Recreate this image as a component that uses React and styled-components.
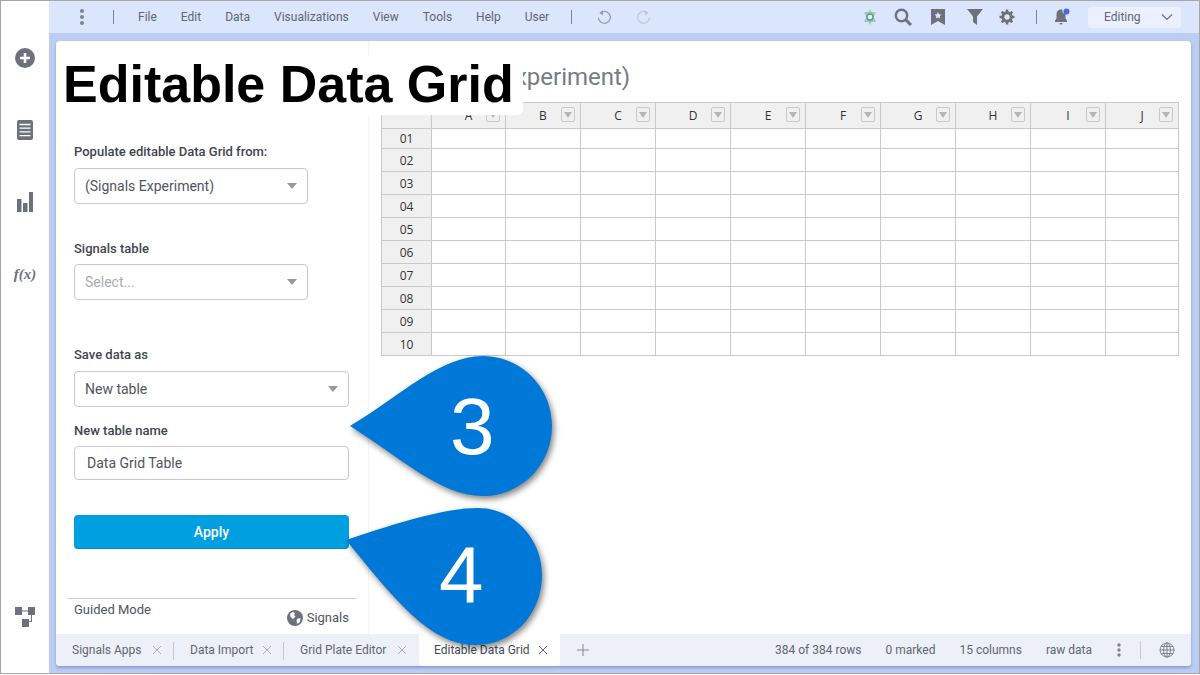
import React from "react";
import styled, { createGlobalStyle } from "styled-components";

const GlobalStyle = createGlobalStyle`
  html, body {
    margin: 0;
    padding: 0;
    background: #fff;
    font-family: Roboto, "Liberation Sans", sans-serif;
  }
`;

const Frame = styled.div`
  position: relative;
  box-sizing: border-box;
  width: 1200px;
  height: 674px;
  border: 1px solid #a6a6a6;
  display: flex;
  overflow: hidden;
  background: #fff;
`;

const Rail = styled.nav`
  width: 48px;
  flex: none;
  display: flex;
  flex-direction: column;
  align-items: center;
  padding-top: 45px;
  box-sizing: border-box;
  color: #6d717b;
`;

const RailIcon = styled.div`
  height: 24px;
  margin-bottom: ${(p) => p.$gap || 48}px;
  display: flex;
  align-items: center;
  justify-content: center;
  margin-top: ${(p) => (p.$bottom ? "auto" : "0")};
`;

const Fx = styled.span`
  font-family: "Liberation Serif", serif;
  font-style: italic;
  font-weight: 700;
  font-size: 15px;
  color: #6d717b;
`;

const Main = styled.div`
  flex: 1;
  min-width: 0;
  display: flex;
  flex-direction: column;
  background: #bccdf3;
`;

const Toolbar = styled.header`
  height: 32px;
  flex: none;
  background: #dbe5fb;
  display: flex;
  align-items: center;
  padding-left: 30px;
  padding-right: 18px;
  color: #6b707a;
`;

const VLine = styled.span`
  width: 1px;
  height: ${(p) => p.$h || 14}px;
  background: ${(p) => p.$color || "#7d828c"};
  flex: none;
  margin-left: ${(p) => p.$ml || 0}px;
`;

const Menu = styled.div`
  display: flex;
  gap: 24px;
  margin-left: 24px;
`;

const MenuItem = styled.span`
  font-size: 12px;
  color: #5f6672;
`;

const ToolIcon = styled.span`
  display: flex;
  align-items: center;
  justify-content: center;
  flex: none;
  width: ${(p) => p.$w || 20}px;
  margin-left: ${(p) => p.$ml || 0}px;
`;

const ModeSelect = styled.div`
  width: 93px;
  height: 21px;
  flex: none;
  margin-left: 16px;
  box-sizing: border-box;
  padding: 0 8px 0 16px;
  background: #eaf0fd;
  border-radius: 3px;
  display: flex;
  align-items: center;
  justify-content: space-between;
  font-size: 12px;
  color: #5f6672;
`;

const RightTools = styled.div`
  margin-left: auto;
  display: flex;
  align-items: center;
`;

const Card = styled.div`
  flex: 1;
  min-height: 0;
  margin: 8px 8px 7px 7px;
  border-radius: 4px;
  background: #fff;
  display: flex;
  flex-direction: column;
  box-shadow: 0 2px 3px rgba(80, 100, 160, 0.45);
  overflow: hidden;
`;

const CardBody = styled.div`
  flex: 1;
  min-height: 0;
  display: flex;
`;

const SidePanel = styled.aside`
  width: 313px;
  flex: none;
  box-sizing: border-box;
  padding: 103px 12px 0 12px;
  border-right: 1px solid #f3f4fb;
  display: flex;
  flex-direction: column;
`;

const Field = styled.div`
  margin-top: ${(p) => p.$mt || 0}px;
  padding: 0 6px;
  width: ${(p) => p.$w}px;
  box-sizing: content-box;
`;

const Label = styled.label`
  display: block;
  height: 16px;
  line-height: 16px;
  font-size: 13px;
  font-weight: 500;
  color: #3f4550;
  margin-bottom: ${(p) => p.$mb || 8}px;
`;

const SelectBox = styled.div`
  height: 36px;
  box-sizing: border-box;
  border: 1px solid #c9c9c9;
  border-radius: 4px;
  display: flex;
  align-items: center;
  justify-content: space-between;
  padding: 0 10px;
  font-size: 14px;
  color: ${(p) => (p.$placeholder ? "#a9abb0" : "#4f5560")};
`;

const Caret = styled.span`
  width: 0;
  height: 0;
  border-left: 5.5px solid transparent;
  border-right: 5.5px solid transparent;
  border-top: 6px solid #999;
`;

const TextInput = styled.div`
  height: 34px;
  box-sizing: border-box;
  border: 1px solid #c9c9c9;
  border-radius: 4px;
  display: flex;
  align-items: center;
  padding: 0 12px;
  font-size: 14px;
  color: #4f5560;
`;

const ApplyButton = styled.button`
  display: block;
  width: 100%;
  height: 34px;
  border: 0;
  border-bottom: 1px solid #0090c8;
  border-radius: 4px;
  background: #00a0e0;
  color: #fff;
  font-family: Roboto, sans-serif;
  font-size: 14px;
  font-weight: 500;
  padding: 0;
`;

const PanelFooter = styled.div`
  margin-top: auto;
  height: 36px;
  box-sizing: border-box;
  border-top: 1px solid #c9c9c9;
  padding: 2px 7px 0 6px;
  display: flex;
  justify-content: space-between;
  font-size: 13px;
  line-height: 18px;
  color: #4f5560;
`;

const Signals = styled.span`
  display: flex;
  align-items: center;
  gap: 4px;
`;

const Content = styled.section`
  flex: 1;
  min-width: 0;
  padding: 20px 0 0 12px;
`;

const SheetTitle = styled.h2`
  margin: 0;
  height: 41px;
  padding-left: 28px;
  font-size: 24px;
  line-height: 32px;
  font-weight: 400;
  color: #777b82;
  white-space: nowrap;
`;

const Sheet = styled.div`
  display: grid;
  grid-template-columns: 50px 74px repeat(8, 75px) 73px;
  grid-auto-rows: 23px;
  width: max-content;
  border-top: 1px solid #c9c9c9;
  border-left: 1px solid #c9c9c9;
  font-family: "Open Sans", sans-serif;
  font-size: 12px;
  color: #333;
`;

const Cell = styled.div`
  box-sizing: border-box;
  border-right: 1px solid #c9c9c9;
  border-bottom: 1px solid #c9c9c9;
  background: ${(p) => (p.$head ? "#f0f0f0" : "#fff")};
  display: flex;
  align-items: center;
  justify-content: center;
  position: relative;
  ${(p) => (p.$top ? "height: 26px; margin-bottom: 3px; margin-top: 0;" : "")}
`;

const FilterButton = styled.span`
  position: absolute;
  right: 5px;
  top: 4px;
  width: 14px;
  height: 15px;
  box-sizing: border-box;
  border: 1px solid #c9c9c9;
  border-radius: 2px;
  background: #f0f0f0;
  display: flex;
  align-items: center;
  justify-content: center;
  &::after {
    content: "";
    border-left: 4px solid transparent;
    border-right: 4px solid transparent;
    border-top: 6px solid #b5b5b5;
  }
`;

const BottomBar = styled.footer`
  height: 32px;
  flex: none;
  background: #edf0f8;
  display: flex;
  align-items: stretch;
  font-size: 12px;
  color: #5f6672;
`;

const Tab = styled.div`
  display: flex;
  align-items: center;
  justify-content: space-between;
  box-sizing: border-box;
  width: ${(p) => p.$w}px;
  padding: 0 ${(p) => (p.$active ? 12 : 12)}px 0 ${(p) => (p.$active ? 15 : 16)}px;
  background: ${(p) => (p.$active ? "#fff" : "transparent")};
  border-radius: ${(p) => (p.$active ? "0 0 4px 4px" : "0")};
  color: ${(p) => (p.$active ? "#454b56" : "#5f6672")};
  position: relative;
  ${(p) =>
    p.$sep
      ? `&::after { content: ""; position: absolute; right: 0; top: 8px; height: 18px; width: 1px; background: #c5c8d0; }`
      : ""}
`;

const PlusTab = styled.span`
  align-self: center;
  margin-left: 17px;
  display: flex;
`;

const Status = styled.div`
  margin-left: auto;
  display: flex;
  align-items: center;
  gap: 24px;
  padding-right: 16px;
`;

const StatusTail = styled.div`
  display: flex;
  align-items: center;
  gap: 18px;
`;

const Title = styled.div`
  position: absolute;
  left: 56px;
  top: 54px;
  width: 466px;
  height: 60px;
  background: #fff;
  border-radius: 0 0 6px 0;
  box-sizing: border-box;
  padding-left: 6px;
  font-family: "Liberation Sans", Arial, sans-serif;
  font-weight: 700;
  font-size: 52px;
  line-height: 58px;
  color: #000;
  white-space: nowrap;
`;

const Callout = styled.svg`
  position: absolute;
  left: 0;
  top: 0;
  pointer-events: none;
  filter: drop-shadow(2px 3px 3px rgba(0, 0, 0, 0.5));
`;

const CalloutNumber = styled.div`
  position: absolute;
  left: ${(p) => p.$x}px;
  top: ${(p) => p.$y}px;
  font-family: "Liberation Sans", Arial, sans-serif;
  font-size: 80px;
  line-height: 80px;
  color: #fff;
`;

const Dots = ({ r = 2, color = "#7d828c", gap = 6 }) => (
  <svg width="6" height={gap * 2 + 6} viewBox={`0 0 6 ${gap * 2 + 6}`}>
    <circle cx="3" cy="3" r={r} fill={color} />
    <circle cx="3" cy={3 + gap} r={r} fill={color} />
    <circle cx="3" cy={3 + gap * 2} r={r} fill={color} />
  </svg>
);

const Close = ({ color = "#a9acb3" }) => (
  <svg width="10" height="10" viewBox="0 0 10 10" stroke={color} strokeWidth="1" fill="none">
    <path d="M1 1l8 8M9 1l-8 8" />
  </svg>
);

const Globe = ({ size = 16, color = "#7d828c" }) => (
  <svg width={size} height={size} viewBox="0 0 16 16" fill="none" stroke={color} strokeWidth="1">
    <circle cx="8" cy="8" r="7" />
    <ellipse cx="8" cy="8" rx="3.4" ry="7" />
    <path d="M8 1v14M1 8h14M2 4.5h12M2 11.5h12" />
  </svg>
);

const columns = ["A", "B", "C", "D", "E", "F", "G", "H", "I", "J"];
const rows = ["01", "02", "03", "04", "05", "06", "07", "08", "09", "10"];
const menu = ["File", "Edit", "Data", "Visualizations", "View", "Tools", "Help", "User"];

export default function App() {
  return (
    <>
      <GlobalStyle />
      <Frame>
        <Rail>
          <RailIcon>
            <svg width="20" height="20" viewBox="0 0 20 20">
              <circle cx="10" cy="10" r="10" fill="#6d717b" />
              <path d="M10 5v10M5 10h10" stroke="#fff" strokeWidth="2.6" />
            </svg>
          </RailIcon>
          <RailIcon>
            <svg width="16" height="20" viewBox="0 0 16 20">
              <rect width="16" height="20" rx="2" fill="#6d717b" />
              <path d="M2.5 4.5h11M2.5 8.2h11M2.5 11.9h11M2.5 15.6h11" stroke="#fff" strokeWidth="1.3" />
            </svg>
          </RailIcon>
          <RailIcon>
            <svg width="16" height="20" viewBox="0 0 16 20" fill="#6d717b">
              <rect x="0" y="7" width="4.5" height="13" />
              <rect x="6" y="11" width="4.5" height="9" />
              <rect x="12" y="0" width="4" height="20" />
            </svg>
          </RailIcon>
          <RailIcon $gap={1}>
            <Fx>f(x)</Fx>
          </RailIcon>
          <RailIcon $bottom $gap={44}>
            <svg width="20" height="20" viewBox="0 0 20 20" fill="#6d717b">
              <rect x="0" y="0" width="7" height="8" />
              <rect x="13" y="0" width="7" height="8" />
              <rect x="7" y="12" width="7" height="8" />
              <path d="M7 3.5h6v1H7zM16 8h1v7h-3v-1h2z" />
            </svg>
          </RailIcon>
        </Rail>

        <Main>
          <Toolbar>
            <Dots />
            <VLine $ml={28} />
            <Menu>
              {menu.map((m) => (
                <MenuItem key={m}>{m}</MenuItem>
              ))}
            </Menu>
            <VLine $ml={22} />
            <ToolIcon $ml={22}>
              <svg width="16" height="16" viewBox="0 0 16 16" fill="none" stroke="#9a9ea6" strokeWidth="1.3">
                <path d="M4 4.2a6 6 0 1 1-1.6 4.6" />
                <path d="M7 1L3.6 4.2 7 6.6" fill="#9a9ea6" stroke="none" />
              </svg>
            </ToolIcon>
            <ToolIcon $ml={20}>
              <svg width="16" height="16" viewBox="0 0 16 16" fill="none" stroke="#c3c7cf" strokeWidth="1.3">
                <path d="M12 4.2a6 6 0 1 0 1.6 4.6" />
                <path d="M9 1l3.4 3.2L9 6.6" fill="#c3c7cf" stroke="none" />
              </svg>
            </ToolIcon>
            <RightTools>
              <ToolIcon $w={18}>
                <svg width="16" height="18" viewBox="0 0 16 18" fill="none">
                  <path d="M8 1L14 14H2z" fill="#7fc4c0" opacity=".8" />
                  <path d="M8 17L2 4h12z" fill="#8fc79a" opacity=".8" />
                  <circle cx="8" cy="9" r="3" fill="#e8f2ee" stroke="#5b9e8e" strokeWidth="1.4" />
                </svg>
              </ToolIcon>
              <ToolIcon $ml={14}>
                <svg width="18" height="18" viewBox="0 0 18 18" fill="none" stroke="#6d717b">
                  <circle cx="7.5" cy="7.5" r="5.7" strokeWidth="2.4" />
                  <path d="M12 12l5 5" strokeWidth="3" />
                </svg>
              </ToolIcon>
              <ToolIcon $ml={15}>
                <svg width="14" height="16" viewBox="0 0 14 16">
                  <path d="M0 0h14v16l-7-4-7 4z" fill="#6d717b" />
                  <path d="M7 3l1.1 2.3 2.4.3-1.8 1.6.5 2.4L7 8.4 4.800 9.600l.5-2.4L3.500 5.600l2.400-.3z" fill="#dbe5fb" />
                </svg>
              </ToolIcon>
              <ToolIcon $ml={17}>
                <svg width="16" height="16" viewBox="0 0 16 16">
                  <path d="M0 0h16L10 7.500V16L6 13V7.500z" fill="#6d717b" />
                </svg>
              </ToolIcon>
              <ToolIcon $ml={12}>
                <svg width="16" height="16" viewBox="0 0 16 16">
                  <circle cx="8" cy="8" r="4.200" fill="none" stroke="#6d717b" strokeWidth="3" />
                  <path
                    d="M8 0.500v3M8 12.500v3M0.500 8h3M12.500 8h3M2.700 2.700l2.100 2.100M11.200 11.200l2.100 2.100M13.300 2.700l-2.100 2.100M4.800 11.200l-2.100 2.100"
                    stroke="#6d717b"
                    strokeWidth="2.600"
                  />
                </svg>
              </ToolIcon>
              <VLine $ml={19} />
              <ToolIcon $ml={15}>
                <svg width="16" height="18" viewBox="0 0 16 18">
                  <path d="M7 1.500c-3 0-4.500 2.300-4.500 5v4L1 12.500V14h12v-1.500L11.500 10.500V6C9 6 8 4 8.500 1.800 8 1.600 7.500 1.500 7 1.500z" fill="#6d717b" />
                  <path d="M5.500 15h3a1.500 1.500 0 0 1-3 0z" fill="#6d717b" />
                  <circle cx="12.500" cy="3.500" r="3" fill="#4a66e0" />
                </svg>
              </ToolIcon>
              <ModeSelect>
                Editing
                <svg width="12" height="8" viewBox="0 0 12 8" fill="none" stroke="#6b707a" strokeWidth="1.2">
                  <path d="M1 1.500l5 5 5-5" />
                </svg>
              </ModeSelect>
            </RightTools>
          </Toolbar>

          <Card>
            <CardBody>
              <SidePanel>
                <Field $w={234}>
                  <Label>Populate editable Data Grid from:</Label>
                  <SelectBox>
                    (Signals Experiment)
                    <Caret />
                  </SelectBox>
                </Field>
                <Field $w={234} $mt={37}>
                  <Label $mb={7}>Signals table</Label>
                  <SelectBox $placeholder>
                    Select...
                    <Caret />
                  </SelectBox>
                </Field>
                <Field $w={275} $mt={47}>
                  <Label>Save data as</Label>
                  <SelectBox>
                    New table
                    <Caret />
                  </SelectBox>
                </Field>
                <Field $w={275} $mt={16}>
                  <Label $mb={7}>New table name</Label>
                  <TextInput>Data Grid Table</TextInput>
                </Field>
                <Field $w={275} $mt={35}>
                  <ApplyButton>Apply</ApplyButton>
                </Field>
                <PanelFooter>
                  Guided Mode
                  <Signals>
                    <svg width="16" height="16" viewBox="0 0 16 16">
                      <circle cx="8" cy="8" r="8" fill="#6d717b" />
                      <path d="M3 3.500l3-1.500 2 1-1 2 1.500 1.500L6 9 3.500 7zM10 9l3.500-1L13 12l-2.500 2L9.500 11.500z" fill="#fff" />
                    </svg>
                    Signals
                  </Signals>
                </PanelFooter>
              </SidePanel>

              <Content>
                <SheetTitle>(Signals Experiment)</SheetTitle>
                <Sheet>
                  <Cell $head style={{ height: 26, marginBottom: -3 }} />
                  {columns.map((c) => (
                    <Cell $head key={c} style={{ height: 26, marginBottom: -3 }}>
                      {c}
                      <FilterButton />
                    </Cell>
                  ))}
                  {rows.map((r) => (
                    <React.Fragment key={r}>
                      <Cell $head style={{ marginTop: r === "01" ? 3 : 0, height: r === "01" ? 20 : 23 }}>{r}</Cell>
                      {columns.map((c) => (
                        <Cell key={c} style={{ marginTop: r === "01" ? 3 : 0, height: r === "01" ? 20 : 23 }} />
                      ))}
                    </React.Fragment>
                  ))}
                </Sheet>
              </Content>
            </CardBody>

            <BottomBar>
              <Tab $w={118} $sep>
                Signals Apps
                <Close />
              </Tab>
              <Tab $w={110} $sep>
                Data Import
                <Close />
              </Tab>
              <Tab $w={135}>
                Grid Plate Editor
                <Close />
              </Tab>
              <Tab $w={141} $active>
                Editable Data Grid
                <Close color="#5f6672" />
              </Tab>
              <PlusTab>
                <svg width="12" height="12" viewBox="0 0 12 12" stroke="#858992" strokeWidth="1">
                  <path d="M6 0v12M0 6h12" />
                </svg>
              </PlusTab>
              <Status>
                <span>384 of 384 rows</span>
                <span>0 marked</span>
                <span>15 columns</span>
                <span>raw data</span>
                <StatusTail>
                  <Dots r={1.700} gap={5} />
                  <VLine $h={18} $color="#c5c8d0" />
                  <Globe />
                </StatusTail>
              </Status>
            </BottomBar>
          </Card>
        </Main>

        <Title>Editable Data Grid</Title>

        <Callout width="1200" height="675" viewBox="1 1 1200 675">
          <path
            d="M350 426C400 396 440 356 483 356C521 356 552 387 552 426C552 465 521 496 483 496C440 496 400 457 350 426Z"
            fill="#0078d7"
          />
          <path
            d="M346 540C400 522 445 508 478 508C513 508 542 538 542 575C542 614 513 645 475 645C430 645 395 600 346 540Z"
            fill="#0078d7"
          />
        </Callout>
        <CalloutNumber $x={449} $y={386}>3</CalloutNumber>
        <CalloutNumber $x={438} $y={534}>4</CalloutNumber>
      </Frame>
    </>
  );
}
